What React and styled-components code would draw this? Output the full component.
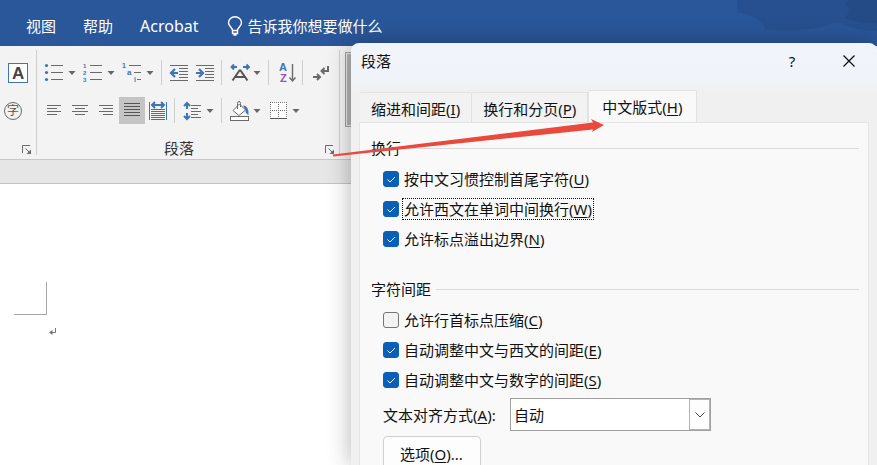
import React from "react";
import styled, { createGlobalStyle } from "styled-components";

const GlobalStyle = createGlobalStyle`
  * {
    box-sizing: border-box;
  }

  body {
    margin: 0;
    font-family: "Noto Sans", "Noto Sans CJK SC", sans-serif;
    font-size: 15px;
    line-height: 22px;
    color: #111;
  }

  button,
  select,
  input {
    margin: 0;
    font: inherit;
    color: inherit;
  }
`;

const GRAY = "#6a6a6a";
const BLUE = "#3f74b5";

const Lines = ({ rows, color = GRAY }) =>
  rows.map(([x1, x2, y]) => (
    <rect key={`${x1}-${y}`} x={x1} y={y} width={x2 - x1} height="1" fill={color} />
  ));

const Icon = ({ children }) => (
  <svg width="20" height="20" viewBox="0 0 20 20" overflow="visible" aria-hidden="true">
    {children}
  </svg>
);

const Glyph = ({ x, y, size = 7, color = BLUE, weight = 700, children }) => (
  <text
    x={x}
    y={y}
    fontSize={size}
    fontWeight={weight}
    fill={color}
    fontFamily="Liberation Sans, Noto Sans CJK SC, sans-serif"
  >
    {children}
  </text>
);

const BulletsIcon = () => (
  <Icon>
    {[3, 10, 17].map((y) => (
      <circle key={y} cx="2.5" cy={y - 0.5} r="1.6" fill={BLUE} />
    ))}
    <Lines rows={[[7, 19, 2], [7, 19, 9], [7, 19, 16]]} />
  </Icon>
);

const NumberingIcon = () => (
  <Icon>
    <Glyph x="0" y="5" size={6}>1</Glyph>
    <Glyph x="0" y="12" size={6}>2</Glyph>
    <Glyph x="0" y="19" size={6}>3</Glyph>
    <Lines rows={[[7, 19, 2], [7, 19, 9], [7, 19, 16]]} />
  </Icon>
);

const MultilevelIcon = () => (
  <Icon>
    <Glyph x="0" y="5">1</Glyph>
    <Glyph x="5" y="12" size={8}>a</Glyph>
    <Glyph x="12" y="19">i</Glyph>
    <Lines rows={[[7, 19, 2], [12, 19, 9], [15, 19, 16]]} />
  </Icon>
);

const OutdentIcon = () => (
  <Icon>
    <Lines rows={[[1, 19, 2], [10, 19, 5], [10, 19, 8], [10, 19, 11], [10, 19, 14], [1, 19, 17]]} />
    <path d="M2 10h7M6 6L2 10l4 4" fill="none" stroke={BLUE} strokeWidth="2.2" />
  </Icon>
);

const IndentIcon = () => (
  <Icon>
    <Lines rows={[[1, 19, 2], [10, 19, 5], [10, 19, 8], [10, 19, 11], [10, 19, 14], [1, 19, 17]]} />
    <path d="M1 10h7M4 6l4 4-4 4" fill="none" stroke={BLUE} strokeWidth="2.2" />
  </Icon>
);

const AsianLayoutIcon = () => (
  <Icon>
    <path d="M2 4h6M5 1.500L2.500 4 5 6.500M14 4h6M17.500 1.500L20 4 17.500 6.500" fill="none" stroke={BLUE} strokeWidth="1.800" />
    <path d="M3.500 17.500L10.500 7.500h1L18.500 17.500M6.500 14h9" fill="none" stroke="#555" strokeWidth="2" />
  </Icon>
);

const SortIcon = () => (
  <Icon>
    <Glyph x="3" y="8" size={11}>A</Glyph>
    <Glyph x="4" y="19" size={11} color="#9253b8">Z</Glyph>
    <path d="M16.500 1v17M13.500 14.500l3 3.500 3-3.500" fill="none" stroke={GRAY} strokeWidth="1.400" />
  </Icon>
);

const MarksIcon = () => (
  <Icon>
    <path d="M18 3v5h-6M14.500 5L11.500 8l3 3" fill="none" stroke={GRAY} strokeWidth="2" />
    <path d="M3 14h6M7 11l3 3-3 3" fill="none" stroke={GRAY} strokeWidth="2" />
  </Icon>
);

const AlignLeftIcon = () => (
  <Icon>
    <Lines rows={[[3, 17, 4], [3, 13, 7], [3, 17, 10], [3, 13, 13]]} />
  </Icon>
);

const AlignCenterIcon = () => (
  <Icon>
    <Lines rows={[[2, 18, 4], [5, 15, 7], [2, 18, 10], [5, 15, 13]]} />
  </Icon>
);

const AlignRightIcon = () => (
  <Icon>
    <Lines rows={[[3, 17, 4], [7, 17, 7], [3, 17, 10], [7, 17, 13]]} />
  </Icon>
);

const JustifyIcon = () => (
  <Icon>
    <Lines rows={[[2, 18, 2], [2, 18, 5], [2, 18, 8], [2, 18, 11], [2, 18, 14]]} color="#555" />
  </Icon>
);

const DistributeIcon = () => (
  <Icon>
    <path d="M1.500 1v18M18.500 1v18" stroke={BLUE} />
    <path d="M4 4h12M7 1L4 4l3 3M13 1l3 3-3 3" fill="none" stroke={BLUE} strokeWidth="2" />
    <Lines rows={[[3, 17, 8], [3, 17, 10], [3, 17, 12], [3, 17, 14], [3, 17, 16], [3, 17, 18]]} />
  </Icon>
);

const LineSpacingIcon = () => (
  <Icon>
    <path d="M5 2v6M2 5l3-3 3 3M5 12v6M2 15l3 3 3-3" fill="none" stroke={BLUE} strokeWidth="2" />
    <Lines rows={[[9, 19, 4], [9, 16, 7], [9, 19, 10], [9, 16, 13], [9, 19, 16]]} />
  </Icon>
);

const ShadingIcon = () => (
  <Icon>
    <path d="M4 9.500L10.500 3l6 6L10 14.500z" fill="#fff" stroke={GRAY} />
    <path d="M8.500 8V2.500q0-2 1.500-2t1.500 2V6" fill="none" stroke={GRAY} />
    <path d="M14 4.500q6 0 5.500 9.500-3.500-2-3-5z" fill={BLUE} />
    <rect x="1.500" y="15.500" width="18" height="4" fill="#fff" stroke={GRAY} />
  </Icon>
);

const BordersIcon = () => (
  <Icon>
    <rect x="2" y="1" width="17" height="17" fill="#fff" />
    <path
      d="M2 1.500h17M2 9.500h17M2.500 1v17M10.500 1v17M18.500 1v17"
      stroke="#777"
      strokeDasharray="1 1"
    />
    <rect x="2" y="17" width="17" height="1" fill="#555" />
  </Icon>
);

const CharBorderIcon = () => (
  <Icon>
    <rect x="0.500" y="0.500" width="19" height="19" fill="#fff" stroke={BLUE} />
    <Glyph x="4" y="16" size={17} color="#444">A</Glyph>
  </Icon>
);

const EncloseIcon = () => (
  <Icon>
    <circle cx="10" cy="10" r="8.500" fill="none" stroke={GRAY} />
    <Glyph x="4" y="14" size={12} weight={400} color="#555">字</Glyph>
  </Icon>
);

const LauncherIcon = () => (
  <svg width="10" height="10" viewBox="0 0 10 10" aria-hidden="true">
    <path d="M0.500 8V0.500H8M3.500 3.500l5 5" fill="none" stroke={GRAY} />
    <path d="M9 4.500V9H4.500z" fill={GRAY} />
  </svg>
);

const BulbIcon = () => (
  <svg width="16" height="20" viewBox="0 0 16 20" aria-hidden="true">
    <path
      d="M5.500 14.500C5.500 11.500 1.500 10.500 1.500 6.800A6.500 6 0 0 1 14.500 6.800C14.500 10.500 10.500 11.500 10.500 14.500zM5.500 14v3.500h5V14M6.500 19h3"
      fill="none"
      stroke="#fff"
      strokeWidth="1.400"
    />
  </svg>
);

const CaretIcon = () => (
  <svg width="8" height="4" viewBox="0 0 8 4" aria-hidden="true">
    <path d="M0.500 0h7L4 4z" fill="#666" />
  </svg>
);

const ReturnMark = () => (
  <svg width="8" height="8" viewBox="0 0 8 8" aria-hidden="true">
    <path d="M6.500 0v4.500H2" fill="none" stroke="#777" />
    <path d="M0 4.500L3.500 2v5z" fill="#777" />
  </svg>
);

const ROW_ONE = [
  { label: "项目符号", icon: BulletsIcon, split: true },
  { label: "编号", icon: NumberingIcon, split: true },
  { label: "多级列表", icon: MultilevelIcon, split: true },
  null,
  { label: "减少缩进量", icon: OutdentIcon },
  { label: "增加缩进量", icon: IndentIcon },
  null,
  { label: "中文版式", icon: AsianLayoutIcon, split: true },
  null,
  { label: "排序", icon: SortIcon },
  null,
  { label: "显示编辑标记", icon: MarksIcon },
];

const ROW_TWO = [
  { label: "左对齐", icon: AlignLeftIcon },
  { label: "居中", icon: AlignCenterIcon },
  { label: "右对齐", icon: AlignRightIcon },
  { label: "两端对齐", icon: JustifyIcon, active: true },
  { label: "分散对齐", icon: DistributeIcon },
  null,
  { label: "行和段落间距", icon: LineSpacingIcon, split: true },
  null,
  { label: "底纹", icon: ShadingIcon, split: true },
  { label: "边框", icon: BordersIcon, split: true },
];

const WRAP_OPTIONS = [
  { text: "按中文习惯控制首尾字符", accessKey: "U", checked: true },
  { text: "允许西文在单词中间换行", accessKey: "W", checked: true, focused: true },
  { text: "允许标点溢出边界", accessKey: "N", checked: true },
];

const SPACING_OPTIONS = [
  { text: "允许行首标点压缩", accessKey: "C", checked: false },
  { text: "自动调整中文与西文的间距", accessKey: "E", checked: true },
  { text: "自动调整中文与数字的间距", accessKey: "S", checked: true },
];

const Tools = ({ items, centered }) => (
  <ToolRow $centered={centered}>
    {items.map((item, i) =>
      item ? (
        <ToolButton key={item.label} $active={item.active} $split={item.split} aria-label={item.label}>
          <item.icon />
          {item.split && <CaretIcon />}
        </ToolButton>
      ) : (
        <ToolDivider key={i} />
      )
    )}
  </ToolRow>
);

const Keyed = ({ text, accessKey, suffix }) => (
  <>
    {text}(<Underlined>{accessKey}</Underlined>){suffix}
  </>
);

const Option = ({ text, accessKey, checked, focused }) => (
  <OptionRow>
    <CheckCell>
      <Checkbox type="checkbox" defaultChecked={checked} />
      <svg width="16" height="16" viewBox="0 0 16 16" aria-hidden="true">
        <path d="M4.500 8.500L7 11l5-5" fill="none" stroke="#fff" />
      </svg>
    </CheckCell>
    <OptionText $focused={focused}>
      <Keyed text={text} accessKey={accessKey} />
    </OptionText>
  </OptionRow>
);

const OptionGroup = ({ title, options }) => (
  <Fieldset role="group" aria-label={title}>
    <GroupTitle>{title}</GroupTitle>
    {options.map((option) => (
      <Option key={option.accessKey} {...option} />
    ))}
  </Fieldset>
);

const ParagraphDialog = () => (
  <Dialog role="dialog" aria-label="段落">
    <TitleBar>
      <DialogTitle>段落</DialogTitle>
      <TitleButton aria-label="帮助">?</TitleButton>
      <TitleButton aria-label="关闭">
        <svg width="12" height="12" viewBox="0 0 12 12" aria-hidden="true">
          <path d="M0.500 0.500l11 11M11.500 0.500l-11 11" stroke="#111" strokeWidth="1.300" />
        </svg>
      </TitleButton>
    </TitleBar>
    <DialogTabs role="tablist">
      <DialogTab role="tab">
        <Keyed text="缩进和间距" accessKey="I" />
      </DialogTab>
      <DialogTab role="tab">
        <Keyed text="换行和分页" accessKey="P" />
      </DialogTab>
      <DialogTab role="tab" aria-selected="true" $active>
        <Keyed text="中文版式" accessKey="H" />
      </DialogTab>
    </DialogTabs>
    <Panel role="tabpanel">
      <OptionGroup title="换行" options={WRAP_OPTIONS} />
      <OptionGroup title="字符间距" options={SPACING_OPTIONS} />
      <SelectRow>
        <SelectLabel htmlFor="text-align">
          <Keyed text="文本对齐方式" accessKey="A" suffix=":" />
        </SelectLabel>
        <SelectBox>
          <Select id="text-align" defaultValue="自动">
            <option>自动</option>
          </Select>
          <SelectArrow>
            <svg width="10" height="6" viewBox="0 0 10 6" aria-hidden="true">
              <path d="M0.500 0.500L5 5l4.500-4.500" fill="none" stroke="#444" />
            </svg>
          </SelectArrow>
        </SelectBox>
      </SelectRow>
      <OptionsButton>
        <Keyed text="选项" accessKey="O" suffix="..." />
      </OptionsButton>
    </Panel>
  </Dialog>
);

export default function App() {
  return (
    <Window>
      <GlobalStyle />
      <Header>
        <HeaderTab>视图</HeaderTab>
        <HeaderTab>帮助</HeaderTab>
        <HeaderTab $latin>Acrobat</HeaderTab>
        <TellMe>
          <BulbIcon />
          告诉我你想要做什么
        </TellMe>
        <HeaderArt viewBox="0 0 140 46" aria-hidden="true">
          <path d="M0 0L-4 12Q12 13 22 21T26 29Q60 32 86 27Q100 20 106 24Q116 30 140 31V0z" fill="#26508f" />
          <path d="M108 4Q116 8 108 18Q126 24 140 23V0H112z" fill="#244b85" />
        </HeaderArt>
      </Header>
      <Ribbon>
        <FontGroup>
          <Tools items={[{ label: "字符边框", icon: CharBorderIcon }]} centered />
          <Tools items={[{ label: "带圈字符", icon: EncloseIcon }]} />
          <GroupFooter>
            <Launcher aria-label="字体设置">
              <LauncherIcon />
            </Launcher>
          </GroupFooter>
        </FontGroup>
        <ParagraphGroup>
          <Tools items={ROW_ONE} />
          <Tools items={ROW_TWO} />
          <GroupFooter>
            <GroupName>段落</GroupName>
            <Launcher aria-label="段落设置">
              <LauncherIcon />
            </Launcher>
          </GroupFooter>
        </ParagraphGroup>
        <StyleGallery />
      </Ribbon>
      <RulerBand />
      <Page>
        <MarginCorner />
        <MarkLine>
          <ReturnMark />
        </MarkLine>
      </Page>
      <ParagraphDialog />
      <Pointer viewBox="0 0 272 40" aria-hidden="true">
        <path d="M0 37.500L260 5.500 258 2 271 8 259 15 260 12.500 0 39.500z" fill="#ea4a3c" />
      </Pointer>
    </Window>
  );
}

const Window = styled.div`
  position: relative;
  display: flex;
  flex-direction: column;
  height: 100vh;
  overflow: hidden;
  background: #fff;
`;

const Header = styled.header`
  display: flex;
  align-items: center;
  gap: 27px;
  height: 46px;
  padding: 6px 0 0 26px;
  background: #2a579a;
  color: #fff;
`;

const HeaderTab = styled.button`
  padding: 0;
  border: 0;
  background: none;
  font-size: ${({ $latin }) => ($latin ? "16px" : "15px")};
`;

const TellMe = styled.button`
  display: flex;
  align-items: center;
  gap: 5px;
  padding: 0 0 0 1px;
  border: 0;
  background: none;
`;

const HeaderArt = styled.svg`
  align-self: flex-start;
  width: 140px;
  height: 46px;
  margin: -6px 0 0 auto;
`;

const Ribbon = styled.div`
  display: flex;
  height: 114px;
  padding-top: 4px;
  border-bottom: 1px solid #c8c8c8;
  background: #f3f3f3;
`;

const RibbonGroup = styled.div`
  display: flex;
  flex-direction: column;
  gap: 11px;
  height: 105px;
  padding-top: 9px;
  border-right: 1px solid #cfcfcf;
`;

const FontGroup = styled(RibbonGroup)`
  width: 37px;
`;

const ParagraphGroup = styled(RibbonGroup)`
  width: 303px;
  padding-left: 4px;
`;

const ToolRow = styled.div`
  display: flex;
  align-items: center;
  justify-content: ${({ $centered }) => ($centered ? "center" : "flex-start")};
  flex: none;
  height: 27px;
`;

const ToolButton = styled.button`
  display: flex;
  align-items: center;
  gap: 4px;
  flex: none;
  width: ${({ $split }) => ($split ? "39px" : "26px")};
  height: 27px;
  padding: 0 3px;
  border: 0;
  background: ${({ $active }) => ($active ? "#c5c5c5" : "none")};
`;

const ToolDivider = styled.span`
  width: 1px;
  height: 25px;
  margin: 0 4px 0 3px;
  background: #cfcfcf;
`;

const GroupFooter = styled.div`
  display: flex;
  align-items: center;
  justify-content: flex-end;
  flex: none;
  height: 26px;
`;

const GroupName = styled.span`
  flex: 1;
  padding-right: 4px;
  text-align: center;
  color: #333;
`;

const Launcher = styled.button`
  display: flex;
  padding: 4px 4px 0;
  border: 0;
  background: none;
`;

const StyleGallery = styled.div`
  flex: 1;
  height: 75px;
  margin: 2px 0 0 5px;
  border: 1px solid #a0a0a0;
  background: #b4b4b4;
  box-shadow: inset 0 0 0 1px #e8e8e8;
`;

const RulerBand = styled.div`
  height: 24px;
  border-bottom: 1px solid #c4c4c4;
  background: #e6e6e6;
`;

const Page = styled.main`
  flex: 1;
  padding: 98px 0 0 14px;
`;

const MarginCorner = styled.div`
  width: 33px;
  height: 33px;
  border: solid #a6a6a6;
  border-width: 0 1px 1px 0;
`;

const MarkLine = styled.div`
  display: flex;
  padding: 13px 0 0 35px;
`;

const Dialog = styled.section`
  position: absolute;
  top: 43px;
  right: 0;
  bottom: 0;
  left: 351px;
  display: flex;
  flex-direction: column;
  padding: 0 8px;
  overflow: hidden;
  border-radius: 8px 8px 0 0;
  background: linear-gradient(#f0f4fb, #f0f4fa 32px, #f0f0f0 50px);
  box-shadow: 0 0 24px rgba(0, 0, 0, 0.3);
`;

const TitleBar = styled.div`
  display: flex;
  align-items: center;
  flex: none;
  height: 36px;
  padding-left: 2px;
`;

const DialogTitle = styled.h1`
  flex: 1;
  margin: 0;
  font-size: 15px;
  font-weight: 400;
`;

const TitleButton = styled.button`
  display: flex;
  align-items: center;
  justify-content: center;
  width: 40px;
  height: 32px;
  padding: 0;
  border: 0;
  background: none;

  & + & {
    margin: 0 0 0 17px;
  }
`;

const DialogTabs = styled.div`
  display: flex;
  align-items: flex-end;
  flex: none;
  height: 43px;
  padding-left: 1px;
`;

const DialogTab = styled.button`
  height: ${({ $active }) => ($active ? "33px" : "30px")};
  margin-bottom: ${({ $active }) => ($active ? "-1px" : "0")};
  padding: ${({ $active }) => ($active ? "0 14px 0 13px" : "2px 11px 0 11px")};
  border: 1px solid #e2e2e2;
  border-left-width: ${({ $active }) => ($active ? "1px" : "0")};
  border-bottom: 0;
  border-radius: 2px 2px 0 0;
  background: ${({ $active }) => ($active ? "#f9f9f9" : "#f2f2f2")};
`;

const Panel = styled.div`
  flex: 1 0 auto;
  padding: 14px 9px 0 11px;
  border: 1px solid #e4e4e4;
  border-bottom: 0;
  background: #f9f9f9;
`;

const Fieldset = styled.div`
  & + & {
    margin-top: 24px;
  }
`;

const GroupTitle = styled.h2`
  display: flex;
  align-items: center;
  gap: 5px;
  margin: 0 0 5px;
  font-size: 15px;
  font-weight: 400;

  &::after {
    content: "";
    flex: 1;
    height: 1px;
    background: #d9d9d9;
  }
`;

const OptionRow = styled.label`
  display: flex;
  align-items: center;
  height: 30px;
  padding-left: 12px;
`;

const CheckCell = styled.span`
  display: grid;

  > * {
    grid-area: 1 / 1;
  }

  svg {
    pointer-events: none;
  }
`;

const Checkbox = styled.input`
  appearance: none;
  width: 16px;
  height: 16px;
  border: 1px solid #757575;
  border-radius: 3px;
  background: #f3f3f3;

  &:checked {
    border-color: #0a60b8;
    background: #0a60b8;
  }

  &:not(:checked) + svg {
    visibility: hidden;
  }
`;

const OptionText = styled.span`
  margin-left: 3px;
  padding: 0 1px;
  border: 1px dotted ${({ $focused }) => ($focused ? "#111" : "transparent")};
  line-height: 20px;
`;

const Underlined = styled.u`
  text-underline-offset: 2px;
`;

const SelectRow = styled.div`
  display: flex;
  align-items: center;
  padding: 3px 0 0 12px;
`;

const SelectLabel = styled.label`
  width: 127px;
`;

const SelectBox = styled.div`
  position: relative;
  flex: 0 1 201px;
`;

const Select = styled.select`
  appearance: none;
  display: block;
  width: 100%;
  height: 33px;
  padding: 0 24px 0 3px;
  border: 1px solid #a0a0a0;
  border-radius: 0;
  background: #fff;
`;

const SelectArrow = styled.span`
  position: absolute;
  top: 1px;
  right: 1px;
  bottom: 1px;
  display: flex;
  align-items: center;
  justify-content: center;
  width: 21px;
  border: 1px solid #b4b4b4;
  background: #fdfdfd;
  pointer-events: none;
`;

const OptionsButton = styled.button`
  height: 35px;
  margin: 5px 0 0 12px;
  padding: 0 17px 0 16px;
  border: 1px solid #d0d0d0;
  border-radius: 4px;
  background: #fdfdfd;
`;

const Pointer = styled.svg`
  position: absolute;
  top: 117px;
  left: 333px;
  width: 272px;
  height: 40px;
  pointer-events: none;
`;
